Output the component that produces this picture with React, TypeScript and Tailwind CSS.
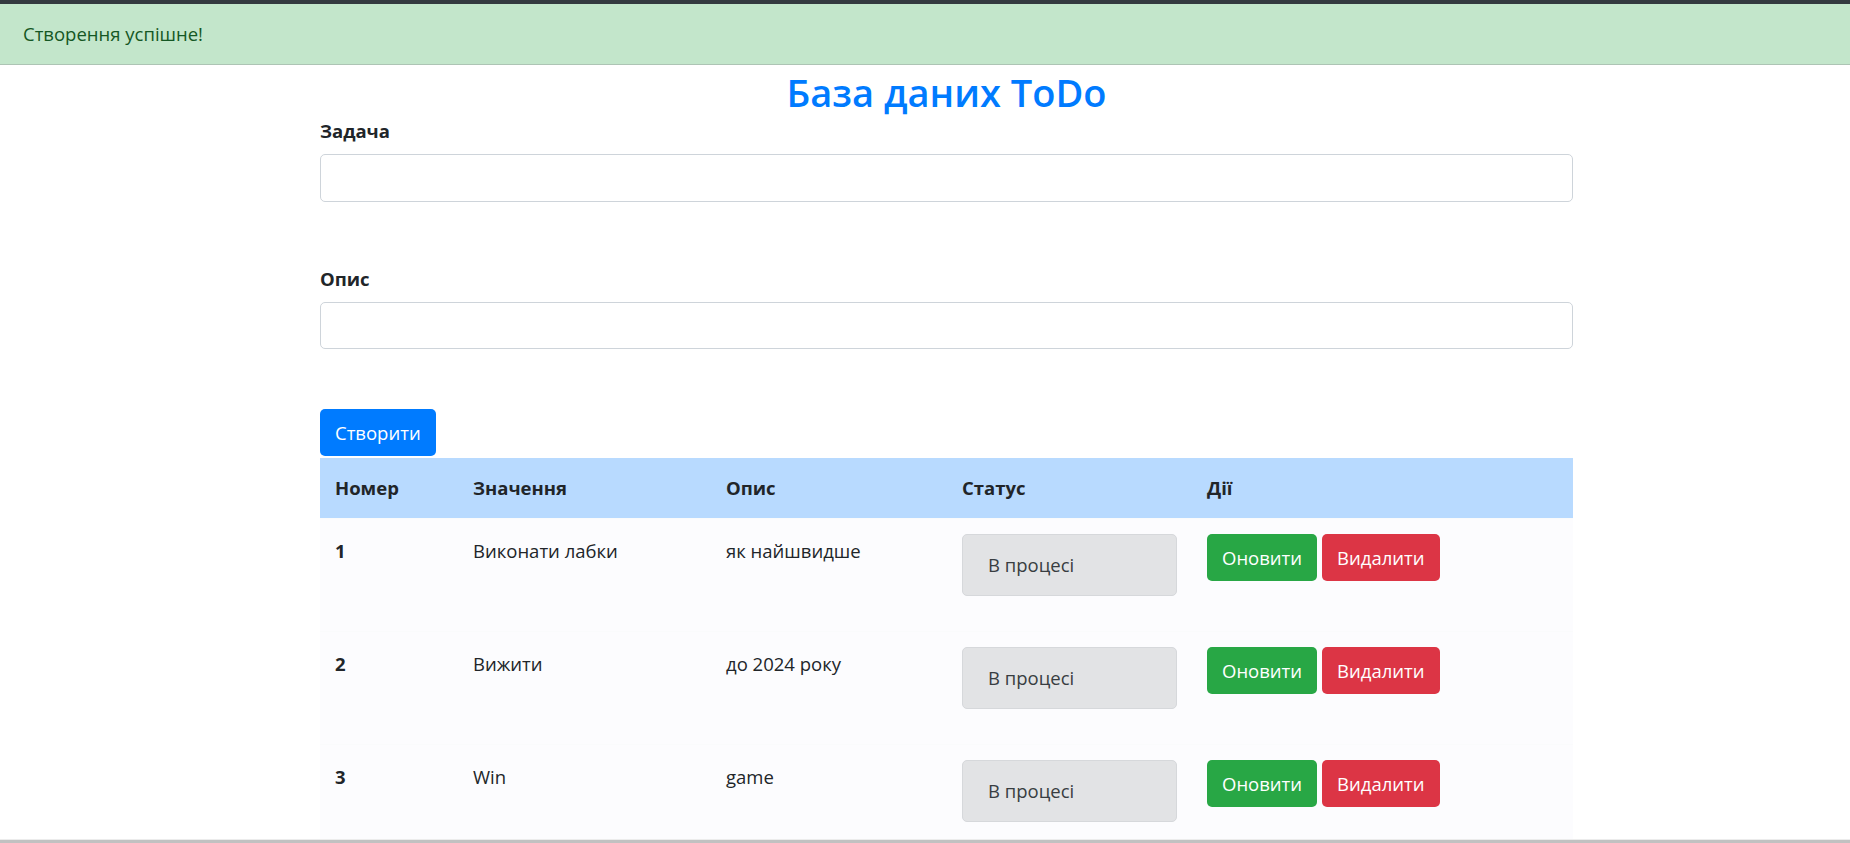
import React from "react";

const todos = [
  { id: 1, title: "Виконати лабки", desc: "як найшвидше", status: "В процесі" },
  { id: 2, title: "Вижити", desc: "до 2024 року", status: "В процесі" },
  { id: 3, title: "Win", desc: "game", status: "В процесі" },
];

export default function App() {
  return (
    <div
      className="min-h-screen bg-white text-[18.5px] leading-[30px] text-[#212529]"
      style={{ fontFamily: '"Open Sans", "Noto Sans", sans-serif' }}
    >
      <div className="h-[4px] bg-[#343a40]" />

      {/* Success alert */}
      <div className="border-b border-[#adc4b4] bg-[#c3e6cb] px-[23px] py-[15px] text-[#155724]">
        Створення успішне!
      </div>

      <div className="ml-[320px] w-[1253px]">
        <h1 className="mt-[3px] text-center text-[38px] font-semibold leading-[48px] text-[#007bff]">
          База даних ToDo
        </h1>

        {/* Form */}
        <div>
          <label className="block font-bold mb-[8px]">Задача</label>
          <input
            type="text"
            className="block h-[48px] w-full rounded-[5px] border border-[#ced4da] bg-white px-[15px]"
          />
        </div>

        <div className="mt-[62px]">
          <label className="block font-bold mb-[8px]">Опис</label>
          <input
            type="text"
            className="block h-[47px] w-full rounded-[5px] border border-[#ced4da] bg-white px-[15px]"
          />
        </div>

        <button className="mt-[60px] h-[47px] rounded-[5px] bg-[#007bff] px-[15px] text-white">
          Створити
        </button>

        {/* Table */}
        <table className="mt-[2px] w-full border-collapse text-left">
          <thead>
            <tr className="bg-[#b8daff] font-bold">
              <th className="w-[138px] px-[15px] py-[15px]">Номер</th>
              <th className="w-[253px] px-[15px] py-[15px]">Значення</th>
              <th className="w-[236px] px-[15px] py-[15px]">Опис</th>
              <th className="w-[244px] px-[15px] py-[15px]">Статус</th>
              <th className="px-[15px] py-[15px]">Дії</th>
            </tr>
          </thead>
          <tbody className="bg-[#fcfcfe]">
            {todos.map((t) => (
              <tr key={t.id} className="border-t border-[#fafbfc] align-top">
                <td className="px-[15px] pt-[17px] pb-[15px] font-bold">{t.id}</td>
                <td className="px-[15px] pt-[17px] pb-[15px]">{t.title}</td>
                <td className="px-[15px] pt-[17px] pb-[15px]">{t.desc}</td>
                <td className="px-[15px] py-[15px]">
                  <div className="mb-[20px] w-[215px] rounded-[5px] border border-[#d6d8db] bg-[#e2e3e5] px-[25px] py-[15px] text-[#383d41]">
                    {t.status}
                  </div>
                </td>
                <td className="px-[15px] py-[15px]">
                  <div className="flex gap-[5px]">
                    <button className="h-[47px] rounded-[5px] bg-[#28a745] px-[15px] text-white">
                      Оновити
                    </button>
                    <button className="h-[47px] rounded-[5px] bg-[#dc3545] px-[15px] text-white">
                      Видалити
                    </button>
                  </div>
                </td>
              </tr>
            ))}
          </tbody>
        </table>
      </div>

      {/* scrollbar strip */}
      <div className="fixed bottom-0 left-0 right-0 h-[4px] border-t border-[#ececec] bg-[#c1c1c1]" />
    </div>
  );
}
